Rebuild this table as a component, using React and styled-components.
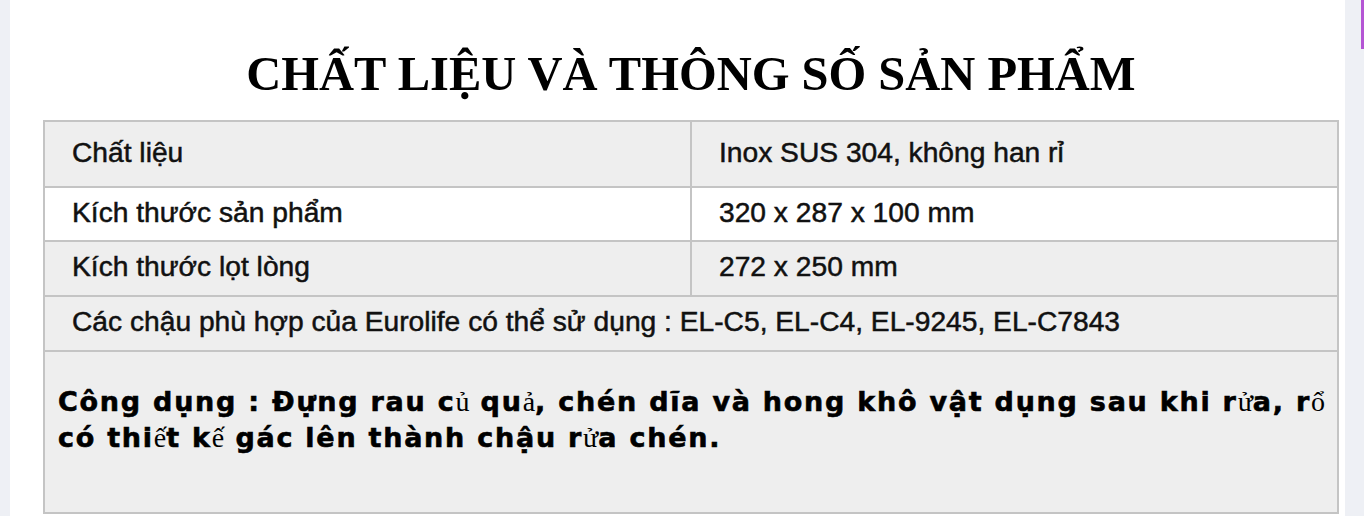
import React from 'react'
import styled, { createGlobalStyle } from 'styled-components'

const GlobalStyle = createGlobalStyle`
  html, body {
    margin: 0;
    padding: 0;
    background: #eef0f5;
  }
`

const Page = styled.div`
  display: flex;
  width: 1364px;
  height: 516px;
  overflow: hidden;
`

const Gutter = styled.div`
  width: ${(p) => p.width}px;
  flex-shrink: 0;
  background: #eef0f5;
  display: flex;
  justify-content: flex-end;
`

const ScrollThumb = styled.div`
  width: 3px;
  height: 49px;
  background: #b455d4;
`

const Content = styled.main`
  width: 1335px;
  flex-shrink: 0;
  background: #fff;
  padding: 48px 0 0 33px;
  box-sizing: border-box;
`

const Title = styled.h2`
  width: 1296px;
  margin: 0 0 20px;
  text-align: center;
  font-family: 'Liberation Serif', 'Times New Roman', serif;
  font-weight: bold;
  font-size: 48.5px;
  line-height: 52px;
  color: #000;
`

const Table = styled.table`
  width: 1296px;
  border-collapse: collapse;
  font-family: 'Liberation Sans', Arial, sans-serif;
  color: #111;
  font-size: 28.2px;
  -webkit-text-stroke: 0.5px #111;
`

const Row = styled.tr`
  height: ${(p) => p.h}px;
  background: ${(p) => (p.white ? '#fff' : '#eeeeee')};
`

const Cell = styled.td`
  border: 2px solid #c4c4c4;
  padding: 0 0 4px 27px;
  vertical-align: middle;
  width: ${(p) => (p.w ? `${p.w}px` : 'auto')};
  box-sizing: border-box;
`

const UsageCell = styled.td`
  border: 2px solid #c4c4c4;
  padding: 32px 0 0 13px;
  vertical-align: top;
`

const Usage = styled.p`
  margin: 0;
  font-family: 'DejaVu Sans', Verdana, sans-serif;
  font-weight: bold;
  font-size: 27px;
  letter-spacing: 1.75px;
  line-height: 36px;
  color: #000;
  -webkit-text-stroke: 0.6px #000;
`

const Serif = styled.span`
  font-family: 'Liberation Serif', 'Times New Roman', serif;
  font-weight: normal;
  font-size: 28px;
  letter-spacing: 0;
  -webkit-text-stroke: 0;
`

const rows = [
  { label: 'Chất liệu', value: 'Inox SUS 304, không han rỉ', h: 66 },
  { label: 'Kích thước sản phẩm', value: '320 x 287 x 100 mm', h: 54, white: true },
  { label: 'Kích thước lọt lòng', value: '272 x 250 mm', h: 55 },
]

export default function App() {
  return (
    <>
      <GlobalStyle />
      <Page>
        <Gutter width={10} />
        <Content>
          <Title>CHẤT LIỆU VÀ THÔNG SỐ SẢN PHẨM</Title>
          <Table>
            <tbody>
              {rows.map((r) => (
                <Row key={r.label} h={r.h} white={r.white}>
                  <Cell w={647}>{r.label}</Cell>
                  <Cell>{r.value}</Cell>
                </Row>
              ))}
              <Row h={55}>
                <Cell colSpan={2}>
                  Các chậu phù hợp của Eurolife có thể sử dụng : EL-C5, EL-C4, EL-9245, EL-C7843
                </Cell>
              </Row>
              <Row h={162}>
                <UsageCell colSpan={2}>
                  <Usage>
                    Công dụng : Đựng rau c<Serif>ủ</Serif> qu<Serif>ả</Serif>, chén dĩa và hong khô vật
                    dụng sau khi r<Serif>ử</Serif>a, r<Serif>ổ</Serif> có thi<Serif>ế</Serif>t k
                    <Serif>ế</Serif> gác lên thành chậu r<Serif>ử</Serif>a chén.
                  </Usage>
                </UsageCell>
              </Row>
            </tbody>
          </Table>
        </Content>
        <Gutter width={19}>
          <ScrollThumb />
        </Gutter>
      </Page>
    </>
  )
}
